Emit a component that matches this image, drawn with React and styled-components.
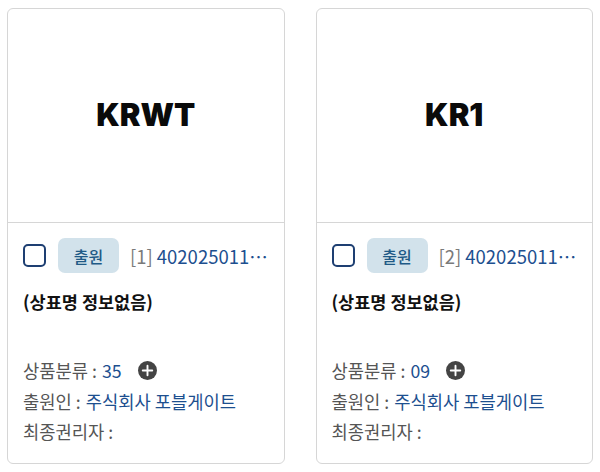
import React from 'react';
import styled, { createGlobalStyle } from 'styled-components';

const GlobalStyle = createGlobalStyle`
  body {
    margin: 0;
    background: #ffffff;
    font-family: "Noto Sans CJK KR", "Noto Sans", sans-serif;
  }
`;

const Grid = styled.div`
  display: flex;
  gap: 31px;
  padding: 8px 7px;
`;

const Card = styled.article`
  width: 277px;
  border: 1px solid #d6d6d6;
  border-radius: 6px;
  background: #fff;
  display: flex;
  flex-direction: column;
`;

const Mark = styled.div`
  height: 211px;
  border-bottom: 1px solid #d6d6d6;
  display: flex;
  align-items: center;
  justify-content: center;
  font-family: Inter, "Noto Sans", sans-serif;
  font-weight: 900;
  font-size: 31px;
  color: #0a0a0a;
  padding-bottom: 2px;
`;

const Info = styled.div`
  padding: 15px 15px 16px;
  display: flex;
  flex-direction: column;
`;

const TopRow = styled.div`
  display: flex;
  align-items: center;
  height: 35px;
`;

const Check = styled.span`
  width: 23px;
  height: 23px;
  box-sizing: border-box;
  border: 2px solid #1e3f72;
  border-radius: 5px;
  margin-right: 12px;
  flex-shrink: 0;
`;

const Badge = styled.span`
  width: 61px;
  height: 35px;
  border-radius: 7px;
  background: #d2e2eb;
  color: #1f5a86;
  font-size: 16px;
  font-weight: 500;
  display: flex;
  align-items: center;
  justify-content: center;
  margin-right: 11px;
  flex-shrink: 0;
`;

const Number = styled.span`
  font-size: 18.5px;
  color: #1d4f8f;
  white-space: nowrap;
`;

const Index = styled.span`
  color: #7a7a7a;
  margin-right: 4px;
`;

const Title = styled.div`
  margin-top: 16px;
  font-size: 17.5px;
  font-weight: 700;
  color: #111;
  line-height: 26px;
`;

const Meta = styled.div`
  margin-top: 40px;
  display: flex;
  flex-direction: column;
`;

const Line = styled.div`
  display: flex;
  align-items: center;
  height: 30.5px;
  font-size: 17.7px;
  color: #555;
`;

const Value = styled.span`
  color: #1d4f8f;
  margin-left: 5px;
`;

const Plus = styled.svg`
  width: 19px;
  height: 19px;
  margin-left: 16px;
`;

const PlusIcon = () => (
  <Plus viewBox="0 0 20 20">
    <circle cx="10" cy="10" r="10" fill="#444" />
    <path d="M10 5v10M5 10h10" stroke="#fff" strokeWidth="2" strokeLinecap="round" />
  </Plus>
);

const marks = [
  { name: 'KRWT', idx: 1, cls: '35' },
  { name: 'KR1', idx: 2, cls: '09' }
];

const App = () => (
  <>
    <GlobalStyle />
    <Grid>
      {marks.map(m => (
        <Card key={m.idx}>
          <Mark>{m.name}</Mark>
          <Info>
            <TopRow>
              <Check />
              <Badge>출원</Badge>
              <Number>
                <Index>[{m.idx}]</Index>402025011…
              </Number>
            </TopRow>
            <Title>(상표명 정보없음)</Title>
            <Meta>
              <Line>
                상품분류 :<Value>{m.cls}</Value>
                <PlusIcon />
              </Line>
              <Line>
                출원인 :<Value>주식회사 포블게이트</Value>
              </Line>
              <Line>최종권리자 :</Line>
            </Meta>
          </Info>
        </Card>
      ))}
    </Grid>
  </>
);

export default App;
